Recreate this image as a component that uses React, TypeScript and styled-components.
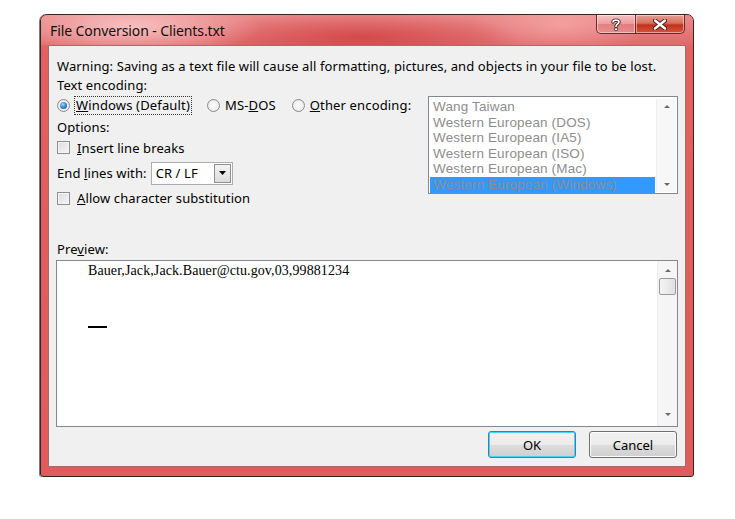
import * as React from 'react';
import styled, { createGlobalStyle } from 'styled-components';

const GlobalStyle = createGlobalStyle`
  html, body {
    margin: 0;
    padding: 0;
    background: #ffffff;
  }
  body {
    font-family: 'Noto Sans', 'Open Sans', sans-serif;
    font-size: 13px;
    color: #000000;
  }
`;

const Page = styled.div`
  width: 735px;
  height: 519px;
  padding: 14px 0 0 40px;
  box-sizing: border-box;
`;

const Window = styled.div`
  width: 654px;
  height: 463px;
  box-sizing: border-box;
  border: 1px solid #3b2222;
  border-radius: 7px 7px 3px 3px;
  background: linear-gradient(180deg, #e67b7c 0%, #e2605f 8%, #df5b5c 100%);
  display: flex;
  flex-direction: column;
  padding: 0 7px 9px 7px;
  box-shadow: -1px 0 0 #7c7c7c;
`;

const TitleBar = styled.div`
  height: 30px;
  margin: 0 -7px;
  padding: 0 8px 0 9px;
  display: flex;
  align-items: flex-start;
  border-radius: 6px 6px 0 0;
  background:
    radial-gradient(ellipse 130px 30px at 90px 12px, rgba(255, 215, 215, 0.75), rgba(255, 215, 215, 0) 100%),
    radial-gradient(ellipse 160px 26px at 320px 22px, rgba(200, 40, 42, 0.55), rgba(200, 40, 42, 0) 100%),
    radial-gradient(ellipse 90px 30px at 520px 10px, rgba(255, 190, 190, 0.5), rgba(255, 190, 190, 0) 100%),
    linear-gradient(180deg, #e98a8b 0%, #e06a6b 100%);
`;

const Title = styled.span`
  font-family: 'Noto Sans', sans-serif;
  font-size: 14px;
  line-height: 16px;
  margin-top: 8px;
  color: #101010;
  letter-spacing: -0.1px;
`;

const CaptionButtons = styled.div`
  margin-left: auto;
  display: flex;
`;

const CaptionButton = styled.div<{ $close?: boolean }>`
  width: ${(p) => (p.$close ? '49px' : '40px')};
  height: 19px;
  box-sizing: border-box;
  display: flex;
  align-items: center;
  justify-content: center;
  border: 1px solid #6b2a2a;
  border-top: none;
  border-left: ${(p) => (p.$close ? 'none' : '1px solid #6b2a2a')};
  border-radius: ${(p) => (p.$close ? '0 0 5px 0' : '0 0 0 5px')};
  background: ${(p) =>
    p.$close
      ? 'linear-gradient(180deg, #e8a093 0%, #d8705e 45%, #c1321d 55%, #d4553e 100%)'
      : 'linear-gradient(180deg, rgba(255,235,235,0.55) 0%, rgba(240,170,170,0.45) 50%, rgba(215,110,110,0.45) 51%, rgba(230,150,150,0.5) 100%)'};
  box-shadow: inset 0 0 0 1px rgba(255, 255, 255, 0.45);
`;

const Client = styled.div`
  flex: 1;
  border: 1px solid #a36d6d;
  background: #f0f0f0;
  padding: 10px 7px 0 8px;
  display: flex;
  flex-direction: column;
`;

const Line = styled.div<{ $h?: number; $mt?: number }>`
  height: ${(p) => p.$h ?? 19}px;
  margin-top: ${(p) => p.$mt ?? 0}px;
  display: flex;
  align-items: center;
  white-space: nowrap;
  letter-spacing: 0.1px;
`;

const EncodingArea = styled.div`
  display: flex;
  align-items: flex-start;
`;

const LeftColumn = styled.div`
  display: flex;
  flex-direction: column;
`;

const RadioRow = styled.div`
  height: 22px;
  display: flex;
  align-items: center;
  gap: 16px;
  letter-spacing: 0.15px;
`;

const Option = styled.label`
  display: flex;
  align-items: center;
  gap: 5px;
`;

const RadioCircle = styled.span<{ $checked?: boolean }>`
  width: 13px;
  height: 13px;
  box-sizing: border-box;
  border-radius: 50%;
  border: 1px solid #8a8a8a;
  background: radial-gradient(circle at 50% 50%, #ffffff 0%, #e2e2e2 100%);
  display: flex;
  align-items: center;
  justify-content: center;
  &::after {
    content: '';
    display: ${(p) => (p.$checked ? 'block' : 'none')};
    width: 7px;
    height: 7px;
    border-radius: 50%;
    background: radial-gradient(circle at 40% 35%, #9fd8ff 0%, #2a7fd0 55%, #0f4f96 100%);
  }
`;

const FocusLabel = styled.span`
  outline: 1px dotted #333333;
  padding: 0 1px;
  line-height: 17px;
`;

const CheckBox = styled.span`
  width: 13px;
  height: 13px;
  box-sizing: border-box;
  border: 1px solid #8e8f8f;
  background: linear-gradient(135deg, #dcdcdc 0%, #f6f6f6 100%);
  box-shadow: inset 0 0 0 1px #f4f4f4;
`;

const CheckRow = styled.label<{ $mt?: number; $h?: number }>`
  display: flex;
  align-items: center;
  gap: 7px;
  height: ${(p) => p.$h ?? 20}px;
  margin-top: ${(p) => p.$mt ?? 0}px;
  letter-spacing: 0.1px;
`;

const SelectRow = styled.div`
  display: flex;
  align-items: center;
  gap: 4px;
  height: 26px;
  margin-top: 3px;
  letter-spacing: 0.1px;
`;

const Select = styled.div`
  width: 82px;
  height: 23px;
  box-sizing: border-box;
  border: 1px solid #abadb3;
  background: #ffffff;
  display: flex;
  align-items: center;
  padding-left: 4px;
`;

const DropButton = styled.span`
  margin-left: auto;
  margin-right: 1px;
  width: 17px;
  height: 19px;
  box-sizing: border-box;
  border: 1px solid #8f8f8f;
  background: linear-gradient(180deg, #f3f3f3 0%, #dcdcdc 100%);
  display: flex;
  align-items: center;
  justify-content: center;
`;

const ListBox = styled.div`
  margin-left: auto;
  margin-top: 2px;
  width: 250px;
  height: 98px;
  box-sizing: border-box;
  border: 1px solid #828790;
  background: #ffffff;
  display: flex;
  padding: 2px 1px 1px 1px;
`;

const ListItems = styled.div`
  flex: 1;
  display: flex;
  flex-direction: column;
`;

const ListItem = styled.div<{ $selected?: boolean }>`
  height: 15.6px;
  line-height: 15.6px;
  padding-left: 3px;
  color: #8d8d8d;
  background: ${(p) => (p.$selected ? '#3399ff' : 'transparent')};
  font-family: 'Liberation Sans', Arial, sans-serif;
  font-size: 13.5px;
  letter-spacing: 0.15px;
  white-space: nowrap;
`;

const ScrollBar = styled.div`
  width: 19px;
  margin-left: 1px;
  background: #f7f7f7;
  border-left: 1px solid #efefef;
  display: flex;
  flex-direction: column;
  align-items: center;
  justify-content: space-between;
  padding: 6px 0;
`;

const ScrollArrow = styled.span<{ $down?: boolean }>`
  width: 0;
  height: 0;
  border-left: 3px solid transparent;
  border-right: 3px solid transparent;
  ${(p) => (p.$down ? 'border-top: 3px solid #6a6a6a;' : 'border-bottom: 3px solid #6a6a6a;')}
`;

const Thumb = styled.span`
  width: 17px;
  height: 17px;
  box-sizing: border-box;
  border: 1px solid #9a9a9a;
  border-radius: 2px;
  background: linear-gradient(90deg, #f4f4f4 0%, #e0e0e0 100%);
  margin-top: 6px;
`;

const PreviewBox = styled.div`
  margin-top: 2px;
  margin-left: -1px;
  height: 167px;
  box-sizing: border-box;
  border: 1px solid #828790;
  background: #ffffff;
  display: flex;
`;

const PreviewText = styled.div`
  flex: 1;
  padding: 2px 0 0 31px;
  font-family: 'Liberation Serif', 'Times New Roman', serif;
  font-size: 14px;
  line-height: 16px;
  letter-spacing: 0.1px;
`;

const Dash = styled.div`
  width: 19px;
  height: 2px;
  background: #000000;
  margin-top: 47px;
`;

const PreviewScroll = styled.div`
  width: 19px;
  background: #f5f5f5;
  border-left: 1px solid #eeeeee;
  display: flex;
  flex-direction: column;
  align-items: center;
  padding: 8px 0 10px 0;
`;

const Buttons = styled.div`
  display: flex;
  justify-content: flex-end;
  gap: 13px;
  margin-top: 4px;
  margin-right: 1px;
`;

const Button = styled.button<{ $default?: boolean }>`
  width: 88px;
  height: 27px;
  border-radius: 3px;
  border: 1px solid ${(p) => (p.$default ? '#3c7fb1' : '#707070')};
  background: linear-gradient(180deg, #f2f2f2 0%, #ebebeb 50%, #dddddd 51%, #cfcfcf 100%);
  box-shadow: ${(p) => (p.$default ? 'inset 0 0 0 1px #48d2f6' : 'inset 0 0 0 1px #fcfcfc')};
  font-family: 'Noto Sans', sans-serif;
  font-size: 13px;
  color: #000000;
  padding: 0;
`;

const Spacer = styled.div`
  flex: 1;
`;

const App: React.FC = () => {
  const encodings = [
    'Wang Taiwan',
    'Western European (DOS)',
    'Western European (IA5)',
    'Western European (ISO)',
    'Western European (Mac)',
    'Western European (Windows)',
  ];

  return (
    <>
      <GlobalStyle />
      <Page>
        <Window>
          <TitleBar>
            <Title>File Conversion - Clients.txt</Title>
            <CaptionButtons>
              <CaptionButton>
                <svg width="10" height="13" viewBox="0 0 10 13">
                  <path
                    d="M2 4 C2 1.5 8 1.5 8 4 C8 6 5 6 5 8.5"
                    fill="none"
                    stroke="#3a2a2a"
                    strokeWidth="3.4"
                    strokeLinecap="round"
                  />
                  <path
                    d="M2 4 C2 1.5 8 1.5 8 4 C8 6 5 6 5 8.5"
                    fill="none"
                    stroke="#ffffff"
                    strokeWidth="1.6"
                    strokeLinecap="round"
                  />
                  <circle cx="5" cy="11.3" r="1.6" fill="#ffffff" stroke="#3a2a2a" strokeWidth="0.9" />
                </svg>
              </CaptionButton>
              <CaptionButton $close>
                <svg width="14" height="11" viewBox="0 0 14 11">
                  <path d="M2 1.5 L12 9.5 M12 1.5 L2 9.5" stroke="#3b1c1c" strokeWidth="4.2" strokeLinecap="round" />
                  <path d="M2 1.5 L12 9.5 M12 1.5 L2 9.5" stroke="#ffffff" strokeWidth="2.4" strokeLinecap="round" />
                </svg>
              </CaptionButton>
            </CaptionButtons>
          </TitleBar>
          <Client>
            <Line>
              Warning: Saving as a text file will cause all formatting, pictures, and objects in your file to be lost.
            </Line>
            <Line>Text encoding:</Line>
            <EncodingArea>
              <LeftColumn>
                <RadioRow>
                  <Option>
                    <RadioCircle $checked />
                    <FocusLabel>
                      <u>W</u>indows (Default)
                    </FocusLabel>
                  </Option>
                  <Option>
                    <RadioCircle />
                    <span>
                      MS-<u>D</u>OS
                    </span>
                  </Option>
                  <Option>
                    <RadioCircle />
                    <span>
                      <u>O</u>ther encoding:
                    </span>
                  </Option>
                </RadioRow>
                <Line $h={22}>Options:</Line>
                <CheckRow $h={19}>
                  <CheckBox />
                  <span>
                    <u>I</u>nsert line breaks
                  </span>
                </CheckRow>
                <SelectRow>
                  <span>
                    End <u>l</u>ines with:
                  </span>
                  <Select>
                    <span>CR / LF</span>
                    <DropButton>
                      <svg width="7" height="4" viewBox="0 0 7 4">
                        <path d="M0 0 H7 L3.5 4 Z" fill="#000000" />
                      </svg>
                    </DropButton>
                  </Select>
                </SelectRow>
                <CheckRow $mt={2}>
                  <CheckBox />
                  <span>
                    <u>A</u>llow character substitution
                  </span>
                </CheckRow>
              </LeftColumn>
              <ListBox>
                <ListItems>
                  {encodings.map((e, i) => (
                    <ListItem key={e} $selected={i === encodings.length - 1}>
                      {e}
                    </ListItem>
                  ))}
                </ListItems>
                <ScrollBar>
                  <ScrollArrow />
                  <ScrollArrow $down />
                </ScrollBar>
              </ListBox>
            </EncodingArea>
            <Line $h={18} $mt={32}>
              <span>
                Pre<u>v</u>iew:
              </span>
            </Line>
            <PreviewBox>
              <PreviewText>
                <div>Bauer,Jack,Jack.Bauer@ctu.gov,03,99881234</div>
                <Dash />
              </PreviewText>
              <PreviewScroll>
                <ScrollArrow />
                <Thumb />
                <Spacer />
                <ScrollArrow $down />
              </PreviewScroll>
            </PreviewBox>
            <Buttons>
              <Button $default>OK</Button>
              <Button>Cancel</Button>
            </Buttons>
          </Client>
        </Window>
      </Page>
    </>
  );
};

export default App;
